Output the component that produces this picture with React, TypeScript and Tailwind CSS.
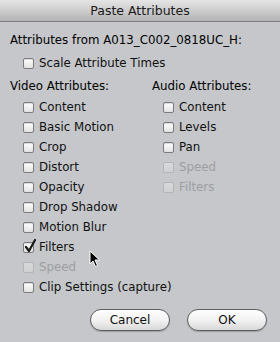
import React from "react";

const font = { fontFamily: '"DejaVu Sans", "Liberation Sans", sans-serif' };

const Box = ({ checked, disabled }: { checked?: boolean; disabled?: boolean }) => (
  <span
    className={`relative inline-block w-[11px] h-[11px] rounded-[2px] border shrink-0 ${
      disabled
        ? "border-[#b3b5b8] bg-gradient-to-b from-[#d8d9db] to-[#cfd0d2]"
        : "border-[#7c7c7c] bg-gradient-to-b from-[#ffffff] to-[#e2e2e2] shadow-[inset_0_1px_1px_rgba(0,0,0,0.15)]"
    }`}
  >
    {checked && (
      <svg className="absolute left-[0px] top-[-4px]" width="13" height="14" viewBox="0 0 13 14">
        <path d="M2 8 L5 12 L11 1" fill="none" stroke="#1a1a1a" strokeWidth="2.2" strokeLinecap="round" strokeLinejoin="round" />
      </svg>
    )}
  </span>
);

const Row = ({ label, checked, disabled }: { label: string; checked?: boolean; disabled?: boolean }) => (
  <div className="flex items-center h-[20px] gap-[5px] whitespace-nowrap">
    <Box checked={checked} disabled={disabled} />
    <span className={disabled ? "text-[#9c9ea1]" : "text-[#111]"}>{label}</span>
  </div>
);

const Btn = ({ label }: { label: string }) => (
  <button className="w-[80px] h-[22px] rounded-full border border-[#5e5e5e] bg-gradient-to-b from-[#ffffff] via-[#f2f2f2] to-[#d9d9d9] text-[12px] text-[#111] shadow-[0_1px_1px_rgba(0,0,0,0.2)]">
    {label}
  </button>
);

export default function App() {
  return (
    <div className="relative w-[280px] h-[342px] overflow-hidden bg-[#c5c7ca] text-[11.8px] leading-[20px]" style={font}>
      <div className="h-[22px] border-b border-[#7d7d7d] bg-gradient-to-b from-[#e6e6e6] to-[#b3b3b3] flex items-center justify-center text-[12.5px] text-[#1a1a1a]">
        Paste Attributes
      </div>
      <div className="pl-[10px] mt-[8px]">
        <div className="h-[20px] whitespace-nowrap">Attributes from A013_C002_0818UC_H:</div>
        <div className="pl-[13px] mt-[3px]">
          <Row label="Scale Attribute Times" />
        </div>
        <div className="grid grid-cols-[142px_1fr] mt-[3px]">
          <div>
            <div className="h-[20px]">Video Attributes:</div>
            <div className="pl-[13px] mt-[1px]">
              <Row label="Content" />
              <Row label="Basic Motion" />
              <Row label="Crop" />
              <Row label="Distort" />
              <Row label="Opacity" />
              <Row label="Drop Shadow" />
              <Row label="Motion Blur" />
              <Row label="Filters" checked />
              <Row label="Speed" disabled />
              <Row label="Clip Settings (capture)" />
            </div>
          </div>
          <div>
            <div className="h-[20px]">Audio Attributes:</div>
            <div className="pl-[11px] mt-[1px]">
              <Row label="Content" />
              <Row label="Levels" />
              <Row label="Pan" />
              <Row label="Speed" disabled />
              <Row label="Filters" disabled />
            </div>
          </div>
        </div>
      </div>
      <div className="flex justify-end gap-[17px] pr-[13px] mt-[12px]">
        <Btn label="Cancel" />
        <Btn label="OK" />
      </div>
      <svg className="absolute left-[89px] top-[250px]" width="12" height="18" viewBox="0 0 12 18">
        <path d="M1 1 L1 14 L4 11 L6.5 16.5 L8.5 15.5 L6 10 L10.5 10 Z" fill="#000" stroke="#fff" strokeWidth="1" strokeLinejoin="round" />
      </svg>
    </div>
  );
}
